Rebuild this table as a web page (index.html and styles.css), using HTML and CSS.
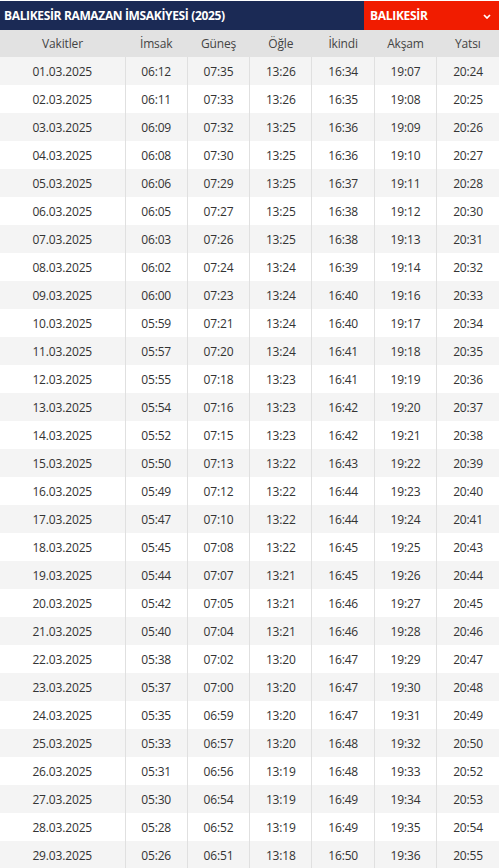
FILE: index.html
```html
<!DOCTYPE html>
<html lang="tr">
<head>
<meta charset="utf-8">
<link rel="stylesheet" href="styles.css">
</head>
<body>
<div class="topbar">
  <div class="title">BALIKESİR RAMAZAN İMSAKİYESİ (2025)</div>
  <div class="city">
    <span>BALIKESİR</span>
    <svg class="chev" width="8" height="5" viewBox="0 0 8 5"><path d="M1 1 L4 4 L7 1" fill="none" stroke="#fff" stroke-width="1.7"/></svg>
  </div>
</div>
<table class="grid">
  <colgroup><col class="c-date"><col><col><col><col><col><col></colgroup>
  <thead>
    <tr><th>Vakitler</th><th>İmsak</th><th>Güneş</th><th>Öğle</th><th>İkindi</th><th>Akşam</th><th>Yatsı</th></tr>
  </thead>
  <tbody>
    <tr><td>01.03.2025</td><td>06:12</td><td>07:35</td><td>13:26</td><td>16:34</td><td>19:07</td><td>20:24</td></tr>
    <tr><td>02.03.2025</td><td>06:11</td><td>07:33</td><td>13:26</td><td>16:35</td><td>19:08</td><td>20:25</td></tr>
    <tr><td>03.03.2025</td><td>06:09</td><td>07:32</td><td>13:25</td><td>16:36</td><td>19:09</td><td>20:26</td></tr>
    <tr><td>04.03.2025</td><td>06:08</td><td>07:30</td><td>13:25</td><td>16:36</td><td>19:10</td><td>20:27</td></tr>
    <tr><td>05.03.2025</td><td>06:06</td><td>07:29</td><td>13:25</td><td>16:37</td><td>19:11</td><td>20:28</td></tr>
    <tr><td>06.03.2025</td><td>06:05</td><td>07:27</td><td>13:25</td><td>16:38</td><td>19:12</td><td>20:30</td></tr>
    <tr><td>07.03.2025</td><td>06:03</td><td>07:26</td><td>13:25</td><td>16:38</td><td>19:13</td><td>20:31</td></tr>
    <tr><td>08.03.2025</td><td>06:02</td><td>07:24</td><td>13:24</td><td>16:39</td><td>19:14</td><td>20:32</td></tr>
    <tr><td>09.03.2025</td><td>06:00</td><td>07:23</td><td>13:24</td><td>16:40</td><td>19:16</td><td>20:33</td></tr>
    <tr><td>10.03.2025</td><td>05:59</td><td>07:21</td><td>13:24</td><td>16:40</td><td>19:17</td><td>20:34</td></tr>
    <tr><td>11.03.2025</td><td>05:57</td><td>07:20</td><td>13:24</td><td>16:41</td><td>19:18</td><td>20:35</td></tr>
    <tr><td>12.03.2025</td><td>05:55</td><td>07:18</td><td>13:23</td><td>16:41</td><td>19:19</td><td>20:36</td></tr>
    <tr><td>13.03.2025</td><td>05:54</td><td>07:16</td><td>13:23</td><td>16:42</td><td>19:20</td><td>20:37</td></tr>
    <tr><td>14.03.2025</td><td>05:52</td><td>07:15</td><td>13:23</td><td>16:42</td><td>19:21</td><td>20:38</td></tr>
    <tr><td>15.03.2025</td><td>05:50</td><td>07:13</td><td>13:22</td><td>16:43</td><td>19:22</td><td>20:39</td></tr>
    <tr><td>16.03.2025</td><td>05:49</td><td>07:12</td><td>13:22</td><td>16:44</td><td>19:23</td><td>20:40</td></tr>
    <tr><td>17.03.2025</td><td>05:47</td><td>07:10</td><td>13:22</td><td>16:44</td><td>19:24</td><td>20:41</td></tr>
    <tr><td>18.03.2025</td><td>05:45</td><td>07:08</td><td>13:22</td><td>16:45</td><td>19:25</td><td>20:43</td></tr>
    <tr><td>19.03.2025</td><td>05:44</td><td>07:07</td><td>13:21</td><td>16:45</td><td>19:26</td><td>20:44</td></tr>
    <tr><td>20.03.2025</td><td>05:42</td><td>07:05</td><td>13:21</td><td>16:46</td><td>19:27</td><td>20:45</td></tr>
    <tr><td>21.03.2025</td><td>05:40</td><td>07:04</td><td>13:21</td><td>16:46</td><td>19:28</td><td>20:46</td></tr>
    <tr><td>22.03.2025</td><td>05:38</td><td>07:02</td><td>13:20</td><td>16:47</td><td>19:29</td><td>20:47</td></tr>
    <tr><td>23.03.2025</td><td>05:37</td><td>07:00</td><td>13:20</td><td>16:47</td><td>19:30</td><td>20:48</td></tr>
    <tr><td>24.03.2025</td><td>05:35</td><td>06:59</td><td>13:20</td><td>16:47</td><td>19:31</td><td>20:49</td></tr>
    <tr><td>25.03.2025</td><td>05:33</td><td>06:57</td><td>13:20</td><td>16:48</td><td>19:32</td><td>20:50</td></tr>
    <tr><td>26.03.2025</td><td>05:31</td><td>06:56</td><td>13:19</td><td>16:48</td><td>19:33</td><td>20:52</td></tr>
    <tr><td>27.03.2025</td><td>05:30</td><td>06:54</td><td>13:19</td><td>16:49</td><td>19:34</td><td>20:53</td></tr>
    <tr><td>28.03.2025</td><td>05:28</td><td>06:52</td><td>13:19</td><td>16:49</td><td>19:35</td><td>20:54</td></tr>
    <tr><td>29.03.2025</td><td>05:26</td><td>06:51</td><td>13:18</td><td>16:50</td><td>19:36</td><td>20:55</td></tr>
  </tbody>
</table>
</body>
</html>
```
FILE: styles.css
```css
html, body {
  margin: 0;
  padding: 0;
  background: #fff;
}
body {
  padding-top: 1px;
  font-family: "Open Sans", "Noto Sans", sans-serif;
  font-size: 12px;
  color: #333;
}
.topbar {
  display: flex;
  height: 29px;
  background: #1b2a55;
}
.title {
  flex: 1;
  display: flex;
  align-items: center;
  padding-left: 4px;
  color: #fff;
  font-weight: 700;
  font-size: 12px;
  letter-spacing: -0.35px;
}
.city {
  width: 135px;
  display: flex;
  align-items: center;
  justify-content: space-between;
  padding: 0 8px 0 6px;
  box-sizing: border-box;
  background: #f11c00;
  color: #fff;
  font-weight: 700;
  font-size: 12px;
  letter-spacing: -0.3px;
}
.chev { margin-top: 1px; }
.grid {
  width: 100%;
  border-collapse: collapse;
  table-layout: fixed;
  letter-spacing: -0.15px;
}
.c-date { width: 125px; }
.grid th {
  height: 27px;
  padding: 0;
  background: #e2e2e2;
  color: #444;
  font-weight: 400;
  text-align: center;
}
.grid td {
  height: 28px;
  padding: 0;
  text-align: center;
  border-left: 1px solid #e0e0e0;
}
.grid td:first-child { border-left: 0; }
.grid tbody tr:nth-child(odd) td { background: #f4f4f4; }
```
